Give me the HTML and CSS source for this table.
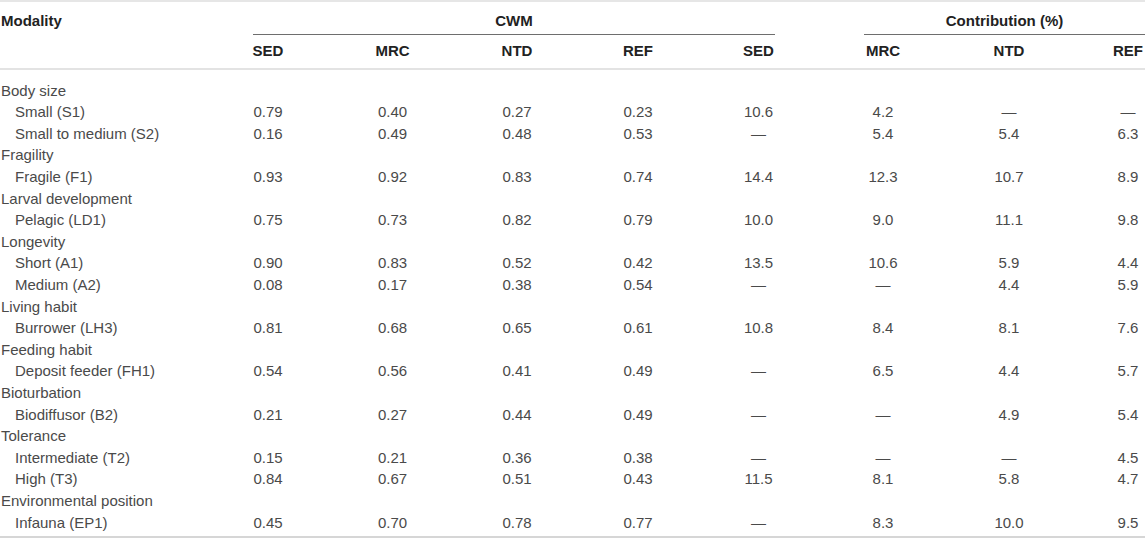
FILE: index.html
```html
<!DOCTYPE html>
<html lang="en">

<head>
    <meta charset="utf-8">
    <meta name="viewport" content="width=device-width,initial-scale=1.0">
    <title>Trait modalities: CWM and contribution</title>
    <link rel="stylesheet" href="styles.css">
</head>

<body>
<table class="traits">
    <colgroup>
        <col class="col-modality">
        <col class="col-a">
        <col class="col-b">
        <col class="col-c">
        <col class="col-d">
        <col class="col-e">
        <col class="col-f">
        <col class="col-g">
        <col class="col-h">
    </colgroup>
    <thead>
    <tr class="group-row">
        <th class="modality" rowspan="2">Modality</th>
        <th colspan="5"><div class="group group-cwm">CWM</div></th>
        <th colspan="3"><div class="group group-contrib">Contribution (%)</div></th>
    </tr>
    <tr class="sub-row">
        <th>SED</th>
        <th>MRC</th>
        <th>NTD</th>
        <th>REF</th>
        <th>SED</th>
        <th>MRC</th>
        <th>NTD</th>
        <th>REF</th>
    </tr>
    </thead>
    <tbody>
    <tr><td class="cat" colspan="9">Body size</td></tr>
    <tr><td class="item">Small (S1)</td><td>0.79</td><td>0.40</td><td>0.27</td><td>0.23</td><td>10.6</td><td>4.2</td><td>—</td><td>—</td></tr>
    <tr><td class="item">Small to medium (S2)</td><td>0.16</td><td>0.49</td><td>0.48</td><td>0.53</td><td>—</td><td>5.4</td><td>5.4</td><td>6.3</td></tr>
    <tr><td class="cat" colspan="9">Fragility</td></tr>
    <tr><td class="item">Fragile (F1)</td><td>0.93</td><td>0.92</td><td>0.83</td><td>0.74</td><td>14.4</td><td>12.3</td><td>10.7</td><td>8.9</td></tr>
    <tr><td class="cat" colspan="9">Larval development</td></tr>
    <tr><td class="item">Pelagic (LD1)</td><td>0.75</td><td>0.73</td><td>0.82</td><td>0.79</td><td>10.0</td><td>9.0</td><td>11.1</td><td>9.8</td></tr>
    <tr><td class="cat" colspan="9">Longevity</td></tr>
    <tr><td class="item">Short (A1)</td><td>0.90</td><td>0.83</td><td>0.52</td><td>0.42</td><td>13.5</td><td>10.6</td><td>5.9</td><td>4.4</td></tr>
    <tr><td class="item">Medium (A2)</td><td>0.08</td><td>0.17</td><td>0.38</td><td>0.54</td><td>—</td><td>—</td><td>4.4</td><td>5.9</td></tr>
    <tr><td class="cat" colspan="9">Living habit</td></tr>
    <tr><td class="item">Burrower (LH3)</td><td>0.81</td><td>0.68</td><td>0.65</td><td>0.61</td><td>10.8</td><td>8.4</td><td>8.1</td><td>7.6</td></tr>
    <tr><td class="cat" colspan="9">Feeding habit</td></tr>
    <tr><td class="item">Deposit feeder (FH1)</td><td>0.54</td><td>0.56</td><td>0.41</td><td>0.49</td><td>—</td><td>6.5</td><td>4.4</td><td>5.7</td></tr>
    <tr><td class="cat" colspan="9">Bioturbation</td></tr>
    <tr><td class="item">Biodiffusor (B2)</td><td>0.21</td><td>0.27</td><td>0.44</td><td>0.49</td><td>—</td><td>—</td><td>4.9</td><td>5.4</td></tr>
    <tr><td class="cat" colspan="9">Tolerance</td></tr>
    <tr><td class="item">Intermediate (T2)</td><td>0.15</td><td>0.21</td><td>0.36</td><td>0.38</td><td>—</td><td>—</td><td>—</td><td>4.5</td></tr>
    <tr><td class="item">High (T3)</td><td>0.84</td><td>0.67</td><td>0.51</td><td>0.43</td><td>11.5</td><td>8.1</td><td>5.8</td><td>4.7</td></tr>
    <tr><td class="cat" colspan="9">Environmental position</td></tr>
    <tr><td class="item">Infauna (EP1)</td><td>0.45</td><td>0.70</td><td>0.78</td><td>0.77</td><td>—</td><td>8.3</td><td>10.0</td><td>9.5</td></tr>
    </tbody>
</table>
</body>
</html>
```

FILE: styles.css
```css
* {
    margin: 0px;
    padding: 0px;
}

body {
    background-color: #fff;
    font-family: "Liberation Sans", Arial, Helvetica, sans-serif;
    font-size: 15px;
    color: #4a4a4a;
}

.traits {
    width: 1145px;
    table-layout: fixed;
    border-collapse: separate;
    border-spacing: 0;
    border-top: 2px solid #e6e6e6;
    border-bottom: 2px solid #d6d6d6;
}

/* column widths put each centred value under its header */
.col-modality { width: 167px; }
.col-a { width: 202px; }
.col-b { width: 47px; }
.col-c { width: 202px; }
.col-d { width: 40px; }
.col-e { width: 201px; }
.col-f { width: 48px; }
.col-g { width: 204px; }
.col-h { width: 34px; }

.traits th,
.traits td {
    line-height: 21.6px;
    text-align: center;
    font-weight: normal;
    white-space: nowrap;
}

.traits th {
    font-weight: bold;
    color: #222;
}

.traits .modality {
    text-align: left;
    vertical-align: top;
    padding: 8px 0 0 1px;
    border-bottom: 2px solid #e3e3e3;
}

.group-row th {
    padding-top: 8px;
}

.group {
    padding-bottom: 2px;
    border-bottom: 1px solid #6e6e6e;
}

.group-cwm {
    margin: 0 84px 0 86px;
}

.group-contrib {
    margin: 0 0 0 5px;
}

.sub-row th {
    padding: 5px 0 7px;
    border-bottom: 2px solid #e3e3e3;
}

.traits td.cat {
    text-align: left;
    padding-left: 1px;
}

.traits td.item {
    text-align: left;
    padding-left: 15px;
}

.traits tbody tr:first-child td {
    padding-top: 9.5px;
}

.traits tbody tr:last-child td {
    padding-bottom: 2.7px;
}
```
